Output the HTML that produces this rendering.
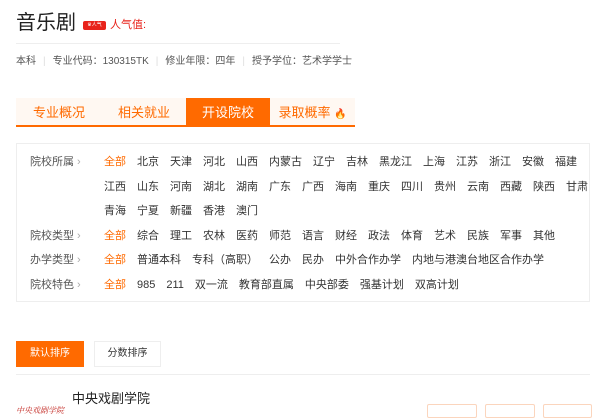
<!DOCTYPE html>
<html><head><meta charset="utf-8"><style>
*{margin:0;padding:0;box-sizing:border-box}
body{width:600px;height:412px;overflow:hidden;background:#fff;font-family:"Liberation Sans","Noto Sans CJK SC",sans-serif;color:#333;position:relative}
.abs{position:absolute;white-space:nowrap}
.row{position:absolute;left:30px;display:flex;font-size:11px;line-height:14px;color:#333}
.row .lb{width:74px;color:#555}
.row .lb:after{content:" ›";color:#aaa}
.row span.v{margin-right:11px}
.row span.on{color:#ff6a00}
</style></head><body>
<div class="abs" style="left:16px;top:10px;font-size:20px;line-height:26px;color:#222">音乐剧</div>
<div class="abs" style="left:83px;top:21px;width:23px;height:9px;background:#e8231b;border-radius:2px;color:#fff;font-size:5px;line-height:9px;text-align:center">♛人气</div>
<div class="abs" style="left:110px;top:18px;font-size:11px;line-height:15px;color:#e8231b">人气值:</div>
<div class="abs" style="left:16px;top:43px;width:324px;height:1px;background:#eee"></div>
<div class="abs" style="left:16px;top:55px;font-size:10px;line-height:14px;color:#555">本科<span style="color:#ddd;margin:0 7px">|</span>专业代码：130315TK<span style="color:#ddd;margin:0 7px">|</span>修业年限：四年<span style="color:#ddd;margin:0 7px">|</span>授予学位：艺术学学士</div>
<div class="abs" style="left:16px;top:98px;width:339px;height:29px;background:#fff8f2;border-bottom:2px solid #ff6a00;display:flex;font-size:13px;line-height:29px;color:#ff6a00">
<div style="width:86px;text-align:center">专业概况</div>
<div style="width:84px;text-align:center">相关就业</div>
<div style="width:84px;text-align:center;background:#ff6a00;color:#fff">开设院校</div>
<div style="width:85px;text-align:center">录取概率 <span style="color:#f04020;font-size:10px">🔥</span></div>
</div>
<div class="abs" style="left:16px;top:143px;width:574px;height:159px;border:1px solid #eee"></div>
<div class="row" style="top:155px"><span class="lb">院校所属</span><span class="v on">全部</span><span class="v">北京</span><span class="v">天津</span><span class="v">河北</span><span class="v">山西</span><span class="v">内蒙古</span><span class="v">辽宁</span><span class="v">吉林</span><span class="v">黑龙江</span><span class="v">上海</span><span class="v">江苏</span><span class="v">浙江</span><span class="v">安徽</span><span class="v">福建</span></div>
<div class="row" style="top:180px"><span class="lb" style="visibility:hidden">院校所属</span><span class="v">江西</span><span class="v">山东</span><span class="v">河南</span><span class="v">湖北</span><span class="v">湖南</span><span class="v">广东</span><span class="v">广西</span><span class="v">海南</span><span class="v">重庆</span><span class="v">四川</span><span class="v">贵州</span><span class="v">云南</span><span class="v">西藏</span><span class="v">陕西</span><span class="v">甘肃</span></div>
<div class="row" style="top:204px"><span class="lb" style="visibility:hidden">院校所属</span><span class="v">青海</span><span class="v">宁夏</span><span class="v">新疆</span><span class="v">香港</span><span class="v">澳门</span></div>
<div class="row" style="top:229px"><span class="lb">院校类型</span><span class="v on">全部</span><span class="v">综合</span><span class="v">理工</span><span class="v">农林</span><span class="v">医药</span><span class="v">师范</span><span class="v">语言</span><span class="v">财经</span><span class="v">政法</span><span class="v">体育</span><span class="v">艺术</span><span class="v">民族</span><span class="v">军事</span><span class="v">其他</span></div>
<div class="row" style="top:253px"><span class="lb">办学类型</span><span class="v on">全部</span><span class="v">普通本科</span><span class="v">专科（高职）</span><span class="v">公办</span><span class="v">民办</span><span class="v">中外合作办学</span><span class="v">内地与港澳台地区合作办学</span></div>
<div class="row" style="top:278px"><span class="lb">院校特色</span><span class="v on">全部</span><span class="v">985</span><span class="v">211</span><span class="v">双一流</span><span class="v">教育部直属</span><span class="v">中央部委</span><span class="v">强基计划</span><span class="v">双高计划</span></div>
<div class="abs" style="left:16px;top:341px;width:68px;height:26px;background:#ff6a00;color:#fff;font-size:10px;line-height:26px;text-align:center">默认排序</div>
<div class="abs" style="left:94px;top:341px;width:67px;height:26px;border:1px solid #eee;color:#333;font-size:10px;line-height:24px;text-align:center">分数排序</div>
<div class="abs" style="left:16px;top:374px;width:574px;height:1px;background:#eee"></div>
<div class="abs" style="left:72px;top:390px;font-size:13px;line-height:17px;color:#222">中央戏剧学院</div>
<div class="abs" style="left:16px;top:405px;font-size:8px;color:#c0201a;font-style:italic;font-family:'Liberation Serif','Noto Serif CJK SC',serif">中央戏剧学院</div>
<div class="abs" style="left:427px;top:404px;width:50px;height:14px;border:1px solid #fbd5bd;border-radius:2px"></div>
<div class="abs" style="left:485px;top:404px;width:50px;height:14px;border:1px solid #fbd5bd;border-radius:2px"></div>
<div class="abs" style="left:543px;top:404px;width:49px;height:14px;border:1px solid #fbd5bd;border-radius:2px"></div>
</body></html>
